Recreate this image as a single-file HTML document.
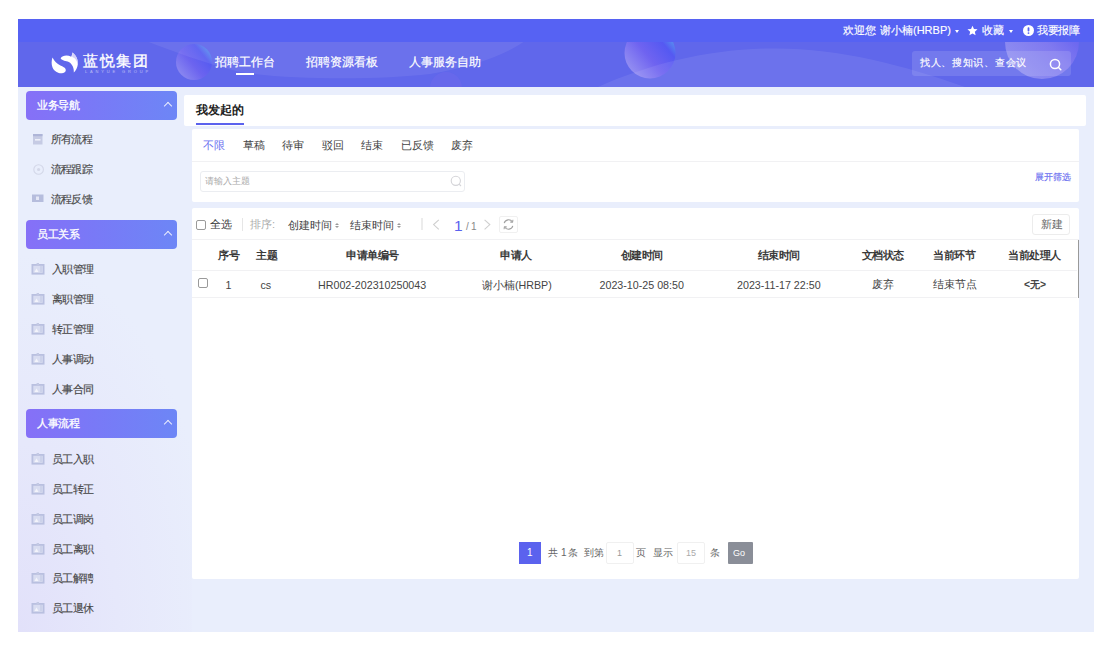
<!DOCTYPE html>
<html><head><meta charset="utf-8">
<style>
*{box-sizing:border-box;margin:0;padding:0}
html,body{width:1111px;height:650px;overflow:hidden;background:#fff;font-family:"Liberation Sans",sans-serif;color:#333}
div,span{position:absolute;white-space:nowrap}
.t{line-height:1}
#app{left:18px;top:19px;width:1076px;height:613px;background:#e9eefc;overflow:hidden}
#topbar{left:18px;top:19px;width:1076px;height:23px;background:#5662f3}
#band{left:18px;top:42px;width:1076px;height:45px;background:#6067eb;overflow:hidden}
#side{left:18px;top:87px;width:174px;height:545px;background:radial-gradient(200px 380px at 0% 100%,#e2e1fa 0%,#e6e8fb 50%,#e9eefc 100%)}
.gh{left:26px;width:151px;height:29px;border-radius:4px;background:linear-gradient(90deg,#8670f7 0%,#7a78f7 40%,#6d86f6 100%);color:#fff;font-size:11px;-webkit-text-stroke:.3px #fff;letter-spacing:-.45px}
.gh span{left:11px;top:9px;line-height:11px}
.gh i{position:absolute;left:139px;top:12px;width:6px;height:6px;border-left:1.5px solid #fff;border-top:1.5px solid #fff;transform:rotate(45deg);opacity:.85}
.it{left:31px;font-size:11px;color:#484848;-webkit-text-stroke:.15px #484848;letter-spacing:-.55px;line-height:11px;height:12px;width:140px}
.ic{position:absolute}
.it span{left:21px;top:0}
.card{background:#fff;border-radius:2px}
.hd{color:#3a3a3a;font-size:11px;font-weight:bold;line-height:11px;letter-spacing:-.45px}
.td{color:#444;font-size:11px;line-height:11px}
</style></head><body>
<div id="app"></div>
<div id="topbar"></div>
<div id="band"></div>
<div id="side"></div>

<!-- sidebar -->
<div class="gh" style="top:91px"><span>业务导航</span><i></i></div>
<div class="it" style="top:134px"><svg class="ic" width="14" height="12" viewBox="0 0 14 12" style="left:1px;top:0"><rect x="1" y="0" width="9.5" height="10.5" fill="#c6cbe4"/><rect x="1" y="0" width="9.5" height="2.2" fill="#aeb5d8"/><rect x="3" y="5" width="5.5" height="1.6" fill="#eef0fa"/></svg><span style="left:19.5px">所有流程</span></div>
<div class="it" style="top:164px"><svg class="ic" width="14" height="12" viewBox="0 0 14 12" style="left:1px;top:0"><circle cx="6.6" cy="5.5" r="4.8" fill="none" stroke="#d3d7e8" stroke-width="1.1"/><circle cx="6.6" cy="5.5" r="1.6" fill="#d3d7e8"/></svg><span style="left:19.5px">流程跟踪</span></div>
<div class="it" style="top:194px"><svg class="ic" width="14" height="12" viewBox="0 0 14 12" style="left:0;top:0"><rect x="1" y="0.5" width="11.5" height="7.5" fill="#b6bddd"/><rect x="5" y="2.5" width="3" height="3.5" fill="#e4e7f6"/></svg><span style="left:19.5px">流程反馈</span></div>
<div class="gh" style="top:220px"><span>员工关系</span><i></i></div>
<div class="it" style="top:264px"><svg class="ic" width="14" height="12" viewBox="0 0 14 12" style="left:0;top:-1.2px"><rect x="1.4" y="1.9" width="11.2" height="8.8" fill="#d9ddf1" stroke="#b9c0e0" stroke-width="1.8"/><rect x="5.6" y="0" width="2.4" height="2.4" fill="#c3c9e4"/><path d="M3.5,9 L5.5,5.5 L7.5,9 Z" fill="#f3f4fb"/><rect x="9" y="3" width="2" height="6" fill="#ccd2ea"/></svg><span style="left:21px">入职管理</span></div>
<div class="it" style="top:294px"><svg class="ic" width="14" height="12" viewBox="0 0 14 12" style="left:0;top:-1.2px"><rect x="1.4" y="1.9" width="11.2" height="8.8" fill="#d9ddf1" stroke="#b9c0e0" stroke-width="1.8"/><rect x="5.6" y="0" width="2.4" height="2.4" fill="#c3c9e4"/><path d="M3.5,9 L5.5,5.5 L7.5,9 Z" fill="#f3f4fb"/><rect x="9" y="3" width="2" height="6" fill="#ccd2ea"/></svg><span style="left:21px">离职管理</span></div>
<div class="it" style="top:324px"><svg class="ic" width="14" height="12" viewBox="0 0 14 12" style="left:0;top:-1.2px"><rect x="1.4" y="1.9" width="11.2" height="8.8" fill="#d9ddf1" stroke="#b9c0e0" stroke-width="1.8"/><rect x="5.6" y="0" width="2.4" height="2.4" fill="#c3c9e4"/><path d="M3.5,9 L5.5,5.5 L7.5,9 Z" fill="#f3f4fb"/><rect x="9" y="3" width="2" height="6" fill="#ccd2ea"/></svg><span style="left:21px">转正管理</span></div>
<div class="it" style="top:354px"><svg class="ic" width="14" height="12" viewBox="0 0 14 12" style="left:0;top:-1.2px"><rect x="1.4" y="1.9" width="11.2" height="8.8" fill="#d9ddf1" stroke="#b9c0e0" stroke-width="1.8"/><rect x="5.6" y="0" width="2.4" height="2.4" fill="#c3c9e4"/><path d="M3.5,9 L5.5,5.5 L7.5,9 Z" fill="#f3f4fb"/><rect x="9" y="3" width="2" height="6" fill="#ccd2ea"/></svg><span style="left:21px">人事调动</span></div>
<div class="it" style="top:384px"><svg class="ic" width="14" height="12" viewBox="0 0 14 12" style="left:0;top:-1.2px"><rect x="1.4" y="1.9" width="11.2" height="8.8" fill="#d9ddf1" stroke="#b9c0e0" stroke-width="1.8"/><rect x="5.6" y="0" width="2.4" height="2.4" fill="#c3c9e4"/><path d="M3.5,9 L5.5,5.5 L7.5,9 Z" fill="#f3f4fb"/><rect x="9" y="3" width="2" height="6" fill="#ccd2ea"/></svg><span style="left:21px">人事合同</span></div>
<div class="gh" style="top:409px"><span>人事流程</span><i></i></div>
<div class="it" style="top:454px"><svg class="ic" width="14" height="12" viewBox="0 0 14 12" style="left:0;top:-1.2px"><rect x="1.4" y="1.9" width="11.2" height="8.8" fill="#d9ddf1" stroke="#b9c0e0" stroke-width="1.8"/><rect x="5.6" y="0" width="2.4" height="2.4" fill="#c3c9e4"/><path d="M3.5,9 L5.5,5.5 L7.5,9 Z" fill="#f3f4fb"/><rect x="9" y="3" width="2" height="6" fill="#ccd2ea"/></svg><span style="left:21px">员工入职</span></div>
<div class="it" style="top:484px"><svg class="ic" width="14" height="12" viewBox="0 0 14 12" style="left:0;top:-1.2px"><rect x="1.4" y="1.9" width="11.2" height="8.8" fill="#d9ddf1" stroke="#b9c0e0" stroke-width="1.8"/><rect x="5.6" y="0" width="2.4" height="2.4" fill="#c3c9e4"/><path d="M3.5,9 L5.5,5.5 L7.5,9 Z" fill="#f3f4fb"/><rect x="9" y="3" width="2" height="6" fill="#ccd2ea"/></svg><span style="left:21px">员工转正</span></div>
<div class="it" style="top:514px"><svg class="ic" width="14" height="12" viewBox="0 0 14 12" style="left:0;top:-1.2px"><rect x="1.4" y="1.9" width="11.2" height="8.8" fill="#d9ddf1" stroke="#b9c0e0" stroke-width="1.8"/><rect x="5.6" y="0" width="2.4" height="2.4" fill="#c3c9e4"/><path d="M3.5,9 L5.5,5.5 L7.5,9 Z" fill="#f3f4fb"/><rect x="9" y="3" width="2" height="6" fill="#ccd2ea"/></svg><span style="left:21px">员工调岗</span></div>
<div class="it" style="top:544px"><svg class="ic" width="14" height="12" viewBox="0 0 14 12" style="left:0;top:-1.2px"><rect x="1.4" y="1.9" width="11.2" height="8.8" fill="#d9ddf1" stroke="#b9c0e0" stroke-width="1.8"/><rect x="5.6" y="0" width="2.4" height="2.4" fill="#c3c9e4"/><path d="M3.5,9 L5.5,5.5 L7.5,9 Z" fill="#f3f4fb"/><rect x="9" y="3" width="2" height="6" fill="#ccd2ea"/></svg><span style="left:21px">员工离职</span></div>
<div class="it" style="top:573px"><svg class="ic" width="14" height="12" viewBox="0 0 14 12" style="left:0;top:-1.2px"><rect x="1.4" y="1.9" width="11.2" height="8.8" fill="#d9ddf1" stroke="#b9c0e0" stroke-width="1.8"/><rect x="5.6" y="0" width="2.4" height="2.4" fill="#c3c9e4"/><path d="M3.5,9 L5.5,5.5 L7.5,9 Z" fill="#f3f4fb"/><rect x="9" y="3" width="2" height="6" fill="#ccd2ea"/></svg><span style="left:21px">员工解聘</span></div>
<div class="it" style="top:603px"><svg class="ic" width="14" height="12" viewBox="0 0 14 12" style="left:0;top:-1.2px"><rect x="1.4" y="1.9" width="11.2" height="8.8" fill="#d9ddf1" stroke="#b9c0e0" stroke-width="1.8"/><rect x="5.6" y="0" width="2.4" height="2.4" fill="#c3c9e4"/><path d="M3.5,9 L5.5,5.5 L7.5,9 Z" fill="#f3f4fb"/><rect x="9" y="3" width="2" height="6" fill="#ccd2ea"/></svg><span style="left:21px">员工退休</span></div>

<!-- header content -->
<svg style="position:absolute;left:18px;top:42px" width="1076" height="45" viewBox="18 42 1076 45">
  <defs>
    <linearGradient id="sp1" x1="0.1" y1="0.9" x2="0.95" y2="0.2">
      <stop offset="0" stop-color="#aaa2f4"/>
      <stop offset="0.45" stop-color="#7462f2"/>
      <stop offset="0.8" stop-color="#5154f4"/>
      <stop offset="1" stop-color="#55a8f0"/>
    </linearGradient>
    <linearGradient id="sp3" x1="0.15" y1="0.85" x2="0.9" y2="0.1">
      <stop offset="0" stop-color="#b4adf6"/>
      <stop offset="0.5" stop-color="#9a88f3"/>
      <stop offset="0.8" stop-color="#7466f3"/>
      <stop offset="1" stop-color="#5f9cf4"/>
    </linearGradient>
  </defs>
  <circle cx="194" cy="62" r="18" fill="url(#sp1)" opacity=".6"/>
  <circle cx="650" cy="53" r="25.5" fill="url(#sp1)" opacity=".75"/>
  <circle cx="1042" cy="42" r="37" fill="url(#sp3)" opacity=".55"/>
  <circle cx="446" cy="88" r="16" fill="#8a70ee" opacity=".18"/>
  <path d="M146,41 C170,50 200,62 240,72 C290,80 380,80 430,74 C475,66 505,55 525,41 Z" fill="#fff" opacity=".07"/>
  <path d="M598,87 C650,64 705,50 768,48.5 C835,47 900,64 965,87 Z" fill="#fff" opacity=".08"/>
</svg>
<svg style="position:absolute;left:48px;top:48px" width="32" height="30" viewBox="48 48 32 30">
  <path d="M52.5,57.6 C50.2,64.5 52.6,71.6 58.8,72.9 C62.8,73.8 66.4,72.2 65.7,69.4 C65.2,67.6 62.8,66.8 60.4,65.6 C57,63.8 54.2,61.2 52.5,57.6 Z" fill="#fff"/>
  <path d="M60.6,58.2 C62.5,55.2 67.5,54.6 71.2,56.8 C72,55.2 72.2,53.8 72.4,52.6 C76,55 78.2,59.5 77.8,64.5 C77.5,67.8 75.8,70.6 73.8,72.6 C74.2,68.5 72.5,64 68.8,62 C66,60.6 62.2,61 60.6,58.2 Z" fill="#fff"/>
  <path d="M72.4,52.6 C76,55 78.2,59.5 77.8,64.5 C77,61 75.5,58 72.2,57 C72.2,55.6 72.3,54 72.4,52.6 Z" fill="#c9c4f7" opacity=".8"/>
</svg>
<div class="t" style="left:843px;top:25px;font-size:11px;-webkit-text-stroke:.15px #fff;color:#fff">欢迎您</div>
<div class="t" style="left:880px;top:25px;font-size:11px;-webkit-text-stroke:.15px #fff;color:#fff">谢小楠(HRBP)</div>
<div style="left:955px;top:30px;width:0;height:0;border-left:2.5px solid transparent;border-right:2.5px solid transparent;border-top:3px solid #fff"></div>
<svg style="position:absolute;left:967px;top:25px" width="11" height="11" viewBox="0 0 24 24"><path d="M12 1.5l3.2 7.1 7.8.8-5.9 5.2 1.7 7.7L12 18.3l-6.8 4 1.7-7.7L1 9.4l7.8-.8z" fill="#fff"/></svg>
<div class="t" style="left:982px;top:25px;font-size:11px;-webkit-text-stroke:.15px #fff;color:#fff">收藏</div>
<div style="left:1009px;top:30px;width:0;height:0;border-left:2.5px solid transparent;border-right:2.5px solid transparent;border-top:3px solid #fff"></div>
<svg style="position:absolute;left:1023px;top:25px" width="11" height="11" viewBox="0 0 22 22"><circle cx="11" cy="11" r="11" fill="#fff"/><rect x="9.2" y="4.5" width="3.6" height="8.5" rx="1.5" fill="#5662f3"/><circle cx="11" cy="16.2" r="1.9" fill="#5662f3"/></svg>
<div class="t" style="left:1037px;top:25px;font-size:11px;letter-spacing:-.4px;-webkit-text-stroke:.15px #fff;color:#fff">我要报障</div>
<div class="t" style="left:83px;top:53px;font-size:15px;letter-spacing:1.6px;-webkit-text-stroke:.35px #fff;color:#fff">蓝悦集团</div>
<div class="t" style="left:84px;top:70px;font-size:4px;letter-spacing:2.85px;left:85px;color:#fff;opacity:.55">LANYUE&nbsp;GROUP</div>
<div class="t" style="left:215px;top:56px;font-size:12px;-webkit-text-stroke:.2px #fff;color:#fff">招聘工作台</div>
<div style="left:236px;top:73px;width:18px;height:2px;background:#fff"></div>
<div class="t" style="left:306px;top:56px;font-size:12px;-webkit-text-stroke:.2px #fff;color:#fff">招聘资源看板</div>
<div class="t" style="left:409px;top:56px;font-size:12px;-webkit-text-stroke:.2px #fff;color:#fff">人事服务自助</div>
<div style="left:912px;top:51px;width:159px;height:25px;border-radius:3px;background:rgba(255,255,255,.12)"></div>
<div class="t" style="left:920px;top:58px;font-size:10.45px;letter-spacing:.7px;-webkit-text-stroke:.15px #fff;color:#fff">找人、搜知识、查会议</div>
<svg style="position:absolute;left:1049px;top:58px" width="14" height="13" viewBox="0 0 14 13"><circle cx="6" cy="6" r="4.6" fill="none" stroke="#fff" stroke-width="1.5"/><path d="M9.3,9.3 L11.8,11.8" stroke="#fff" stroke-width="1.5" stroke-linecap="round"/></svg>

<!-- title card -->
<div class="card" style="left:184px;top:95px;width:902px;height:31px"></div>
<div class="t" style="left:196px;top:104px;font-size:12px;font-weight:bold;color:#222">我发起的</div>
<div style="left:196px;top:123px;width:48px;height:2px;background:#5b62ee"></div>

<!-- filter card -->
<div class="card" style="left:192px;top:129px;width:887px;height:73px"></div>
<div class="t" style="left:203px;top:140px;font-size:11px;color:#6a6ff0">不限</div>
<div class="t" style="left:243px;top:140px;font-size:11px;color:#444">草稿</div>
<div class="t" style="left:282px;top:140px;font-size:11px;color:#444">待审</div>
<div class="t" style="left:322px;top:140px;font-size:11px;color:#444">驳回</div>
<div class="t" style="left:361px;top:140px;font-size:11px;color:#444">结束</div>
<div class="t" style="left:401px;top:140px;font-size:11px;color:#444">已反馈</div>
<div class="t" style="left:451px;top:140px;font-size:11px;color:#444">废弃</div>
<div style="left:192px;top:161px;width:887px;height:1px;background:#f1f1f3"></div>
<div style="left:200px;top:171px;width:265px;height:21px;border:1px solid #ebedf1;border-radius:3px"></div>
<div class="t" style="left:205px;top:177px;font-size:9px;color:#aaa">请输入主题</div>
<svg style="position:absolute;left:449px;top:174px" width="14" height="14" viewBox="0 0 14 14"><circle cx="6.8" cy="6.8" r="4.6" fill="none" stroke="#d4d4d8" stroke-width="1.1"/><path d="M10.2,10.2 L12,12" stroke="#d4d4d8" stroke-width="1.1"/></svg>
<div class="t" style="left:1035px;top:173px;font-size:9.3px;-webkit-text-stroke:.15px #6a6ff0;color:#6a6ff0">展开筛选</div>

<!-- table card -->
<div class="card" style="left:192px;top:208px;width:887px;height:371px"></div>
<div style="left:196px;top:220px;width:10px;height:10px;border:1.2px solid #9a9a9a;border-radius:2px"></div>
<div class="t" style="left:210px;top:219px;font-size:11px;color:#333">全选</div>
<div style="left:242px;top:218px;width:1px;height:13px;background:#e6e6e6"></div>
<div class="t" style="left:250px;top:219px;font-size:11px;color:#aaa">排序:</div>
<div class="t" style="left:288px;top:220px;font-size:11px;color:#444">创建时间</div>
<div style="left:335.3px;top:222.5px;width:0;height:0;border-left:2.6px solid transparent;border-right:2.6px solid transparent;border-bottom:2.8px solid #9a9a9a"></div>
<div style="left:335.3px;top:226.3px;width:0;height:0;border-left:2.6px solid transparent;border-right:2.6px solid transparent;border-top:2.8px solid #9a9a9a"></div>
<div class="t" style="left:350px;top:220px;font-size:11px;color:#444">结束时间</div>
<div style="left:397.3px;top:222.5px;width:0;height:0;border-left:2.6px solid transparent;border-right:2.6px solid transparent;border-bottom:2.8px solid #9a9a9a"></div>
<div style="left:397.3px;top:226.3px;width:0;height:0;border-left:2.6px solid transparent;border-right:2.6px solid transparent;border-top:2.8px solid #9a9a9a"></div>
<div style="left:421px;top:218px;width:1.5px;height:12px;background:#ececec"></div>
<svg style="position:absolute;left:432px;top:219px" width="9" height="12" viewBox="0 0 9 12"><path d="M6.8,0.8 L1.6,5.6 L6.8,10.4" fill="none" stroke="#cfcfcf" stroke-width="1.1"/></svg>
<div class="t" style="left:454px;top:218px;font-size:15.5px;color:#5b62ee">1</div>
<div class="t" style="left:466px;top:222px;font-size:10px;color:#888">/</div>
<div class="t" style="left:471px;top:222px;font-size:10px;color:#888">1</div>
<svg style="position:absolute;left:483px;top:219px" width="9" height="12" viewBox="0 0 9 12"><path d="M1.6,0.8 L6.8,5.6 L1.6,10.4" fill="none" stroke="#cfcfcf" stroke-width="1.1"/></svg>
<div style="left:499px;top:216px;width:19px;height:17px;border:1px solid #f0f0f0;border-radius:2px"></div>
<svg style="position:absolute;left:502px;top:218px" width="13" height="13" viewBox="0 0 13 13"><path d="M2.2,5.2 A4.5,4.5 0 0 1 10.4,4" fill="none" stroke="#a0a0a0" stroke-width="1.1"/><path d="M10.8,7.8 A4.5,4.5 0 0 1 2.6,9" fill="none" stroke="#a0a0a0" stroke-width="1.1"/><path d="M10.9,1.8 L10.6,4.4 L8.1,4.0" fill="none" stroke="#a0a0a0" stroke-width="1"/><path d="M2.1,11.2 L2.4,8.6 L4.9,9.0" fill="none" stroke="#a0a0a0" stroke-width="1"/></svg>
<div style="left:1032px;top:214px;width:38px;height:21px;border:1px solid #ececec;border-radius:3px"></div>
<div class="t" style="left:1041px;top:219px;font-size:11px;color:#666">新建</div>
<div style="left:192px;top:239px;width:887px;height:1px;background:#f1f1f3"></div>
<div style="left:1077.5px;top:240px;width:1.6px;height:58px;background:#999"></div>

<div class="hd" style="left:218px;top:250px">序号</div>
<div class="hd" style="left:256px;top:250px">主题</div>
<div class="hd" style="left:346px;top:250px">申请单编号</div>
<div class="hd" style="left:500px;top:250px">申请人</div>
<div class="hd" style="left:620.7px;top:250px">创建时间</div>
<div class="hd" style="left:757.7px;top:250px">结束时间</div>
<div class="hd" style="left:861.7px;top:250px">文档状态</div>
<div class="hd" style="left:933px;top:250px">当前环节</div>
<div class="hd" style="left:1008px;top:250px">当前处理人</div>
<div style="left:192px;top:270px;width:885px;height:1px;background:#f1f1f3"></div>
<div style="left:198px;top:278px;width:10px;height:10px;border:1.2px solid #9a9a9a;border-radius:2px"></div>
<div class="td" style="left:225.5px;top:279.5px;font-size:10.7px">1</div>
<div class="td" style="left:260.5px;top:279.5px;font-size:10.7px">cs</div>
<div class="td" style="left:318px;top:279.5px;font-size:10.7px">HR002-202310250043</div>
<div class="td" style="left:482px;top:279.5px;font-size:10.7px">谢小楠(HRBP)</div>
<div class="td" style="left:599.5px;top:279.5px;font-size:10.7px">2023-10-25 08:50</div>
<div class="td" style="left:737px;top:279.5px;font-size:10.7px">2023-11-17 22:50</div>
<div class="td" style="left:872px;top:279px">废弃</div>
<div class="td" style="left:933px;top:279px">结束节点</div>
<div class="td" style="left:1024px;top:279px;font-weight:bold;font-size:10.4px">&lt;无&gt;</div>
<div style="left:192px;top:297px;width:885px;height:1px;background:#f1f1f3"></div>

<!-- pagination -->
<div style="left:519px;top:542px;width:22px;height:22px;background:#5b62ee"></div>
<div class="t" style="left:527px;top:548px;font-size:10px;color:#fff">1</div>
<div class="t" style="left:548px;top:548px;font-size:10px;color:#666">共</div>
<div class="t" style="left:561px;top:548px;font-size:10px;color:#666">1</div>
<div class="t" style="left:568px;top:548px;font-size:10px;color:#666">条</div>
<div class="t" style="left:584px;top:548px;font-size:10px;color:#666">到第</div>
<div style="left:606px;top:542px;width:28px;height:22px;border:1px solid #f0f0f0;border-radius:2px"></div>
<div class="t" style="left:617px;top:549px;font-size:9px;color:#999">1</div>
<div class="t" style="left:636px;top:548px;font-size:10px;color:#666">页</div>
<div class="t" style="left:653px;top:548px;font-size:10px;color:#666">显示</div>
<div style="left:677px;top:542px;width:28px;height:22px;border:1px solid #f0f0f0;border-radius:2px"></div>
<div class="t" style="left:686px;top:549px;font-size:9px;color:#aaa">15</div>
<div class="t" style="left:710px;top:548px;font-size:10px;color:#666">条</div>
<div style="left:728px;top:542px;width:25px;height:22px;background:#8a8e98;border-radius:1px"></div>
<div class="t" style="left:733px;top:549px;font-size:9px;color:#fff">Go</div>
</body></html>
